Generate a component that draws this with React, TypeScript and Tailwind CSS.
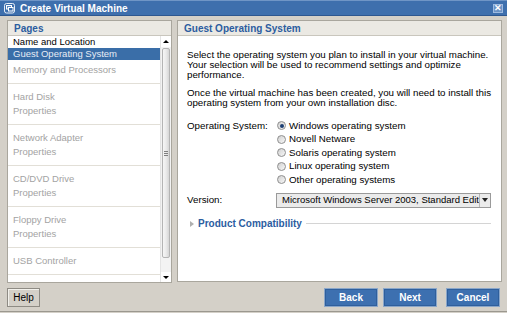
import React from 'react'

const font = "font-['Liberation_Sans',Arial,sans-serif]"

const devices: string[][] = [
  ['Hard Disk', 'Properties'],
  ['Network Adapter', 'Properties'],
  ['CD/DVD Drive', 'Properties'],
  ['Floppy Drive', 'Properties'],
  ['USB Controller'],
]

const osOptions = [
  'Windows operating system',
  'Novell Netware',
  'Solaris operating system',
  'Linux operating system',
  'Other operating systems',
]

function VmIcon() {
  return (
    <svg width="13" height="12" viewBox="0 0 13 12" fill="none">
      <rect x="1.5" y="1.5" width="10" height="9.5" rx="2" stroke="#e8eef7" strokeWidth="1" />
      <rect x="3.5" y="3.5" width="5" height="3.5" stroke="#ffffff" strokeWidth="1" fill="#5b86bd" />
      <rect x="5.5" y="5.5" width="4.5" height="3.5" stroke="#ffffff" strokeWidth="1" fill="#3e6fad" />
    </svg>
  )
}

function Radio({ checked }: { checked?: boolean }) {
  return (
    <span className="w-[9px] h-[9px] rounded-full border border-[#8e8e8e] bg-gradient-to-br from-[#d0d0d0] to-[#f8f8f8] flex items-center justify-center">
      {checked && <span className="w-[4px] h-[4px] rounded-full bg-[#1d3f73]" />}
    </span>
  )
}

function Scrollbar() {
  return (
    <div className="w-[11px] h-full flex flex-col bg-[#f3f3f3] border-l border-[#e4e4e4]">
      <div className="h-[11px] flex items-center justify-center bg-white">
        <span className="w-0 h-0 border-l-[3px] border-r-[3px] border-b-[3px] border-l-transparent border-r-transparent border-b-black" />
      </div>
      <div className="mt-[1px] h-[210px] mx-[1px] rounded-[2px] border border-[#b4b4b4] bg-gradient-to-r from-[#f6f6f6] via-[#ebebeb] to-[#d6d6d6] flex items-center justify-center">
        <div className="flex flex-col gap-[1px]">
          <span className="w-[4px] h-[1px] bg-[#808080]" />
          <span className="w-[4px] h-[1px] bg-[#808080]" />
          <span className="w-[4px] h-[1px] bg-[#808080]" />
        </div>
      </div>
      <div className="flex-1" />
      <div className="h-[10px] flex items-center justify-center bg-white">
        <span className="w-0 h-0 border-l-[3px] border-r-[3px] border-t-[3px] border-l-transparent border-r-transparent border-t-black" />
      </div>
    </div>
  )
}

function PanelHeader({ title }: { title: string }) {
  return (
    <div className="h-[15px] bg-[#ebe9e3] border-b border-[#c9c6bd] pl-[6px] flex items-center text-[10px] font-bold text-[#2c5d9f]">
      {title}
    </div>
  )
}

export default function App() {
  return (
    <div className={`w-[507px] h-[313px] bg-[#d4d0c8] flex flex-col overflow-hidden ${font} text-[9.5px] text-black`}>
      <div className="h-[16px] bg-[#3e6fad] border-t border-[#6f95c6] border-b border-b-[#2d5790] flex items-center pl-[3px] pr-[4px]">
        <VmIcon />
        <span className="ml-[4px] text-[10px] font-bold text-white flex-1">Create Virtual Machine</span>
        <span className="w-[10px] h-[9px] bg-[#6b93c6] border border-[#9fbbe0] flex items-center justify-center text-white text-[9px] font-bold leading-none">✕</span>
      </div>

      <div className="flex gap-[5px] pl-[7px] pt-[4px] h-[267px]">
        <div className="w-[165px] h-[263px] border border-[#a9a69d] flex flex-col bg-white">
          <PanelHeader title="Pages" />
          <div className="flex flex-1 min-h-0">
            <div className="flex-1 flex flex-col">
              <div className="h-[12px] leading-[12px] pl-[5px]">Name and Location</div>
              <div className="h-[12px] leading-[12px] pl-[5px] bg-[#3a6ea8] text-[#e6ecf5]">Guest Operating System</div>
              <div className="h-[24px] pt-[4px] leading-[12px] pl-[5px] text-[#a3a3a3] border-b border-[#e2dfd7]">Memory and Processors</div>
              {devices.map((d, i) => (
                <div key={i} className={`pl-[5px] pt-[6px] text-[#a3a3a3] border-b border-[#e2dfd7] ${d.length > 1 ? 'h-[41px]' : 'h-[27px]'}`}>
                  {d.map(l => (
                    <div key={l} className="leading-[14px]">{l}</div>
                  ))}
                </div>
              ))}
            </div>
            <Scrollbar />
          </div>
        </div>

        <div className="w-[325px] h-[262px] border border-[#a9a69d] flex flex-col bg-white">
          <PanelHeader title="Guest Operating System" />
          <div className="flex-1 pl-[9px] pt-[14px] leading-[10px] text-[9.75px]">
            <div>Select the operating system you plan to install in your virtual machine.</div>
            <div>Your selection will be used to recommend settings and optimize</div>
            <div>performance.</div>
            <div className="mt-[8px]">Once the virtual machine has been created, you will need to install this</div>
            <div>operating system from your own installation disc.</div>

            <div className="mt-[11px] flex">
              <div className="w-[89px] leading-[13.5px]">Operating System:</div>
              <div className="flex flex-col">
                {osOptions.map((o, i) => (
                  <div key={o} className="h-[13.5px] flex items-center gap-[3px] pl-[1px]">
                    <Radio checked={i === 0} />
                    <span>{o}</span>
                  </div>
                ))}
              </div>
            </div>

            <div className="mt-[6px] flex items-center">
              <div className="w-[89px]">Version:</div>
              <div className="w-[215px] h-[15px] border border-[#9a9a9a] bg-[#ebebeb] flex items-center">
                <span className="flex-1 overflow-hidden whitespace-nowrap pl-[5px] text-[9.5px]">Microsoft Windows Server 2003, Standard Edition</span>
                <span className="w-[11px] h-full border-l border-[#b8b8b8] flex items-center justify-center">
                  <span className="w-0 h-0 border-l-[3px] border-r-[3px] border-t-[4px] border-l-transparent border-r-transparent border-t-[#222]" />
                </span>
              </div>
            </div>

            <div className="mt-[11px] flex items-center pr-[10px]">
              <span className="w-0 h-0 border-t-[3px] border-b-[3px] border-l-[4px] border-t-transparent border-b-transparent border-l-[#b0b0b0] ml-[3px] mr-[4px]" />
              <span className="font-bold text-[10px] text-[#2c5d9f]">Product Compatibility</span>
              <span className="flex-1 h-[1px] bg-[#d4d4d4] ml-[4px]" />
            </div>
          </div>
        </div>
      </div>

      <div className="flex items-start pl-[7px] pr-[7px] pt-[5px] h-[28px]">
        <button className="w-[33px] h-[19px] bg-[#d4d0c8] border border-[#8e8b84] shadow-[inset_1px_1px_0_#f2f1ec] text-[10px] text-black">Help</button>
        <div className="flex-1" />
        <button className="w-[54px] h-[19px] bg-[#3d70b0] border border-[#8aa6c9] shadow-[inset_0_0_0_1px_#2f5f9c] text-[10px] font-bold text-white">Back</button>
        <button className="ml-[5px] w-[54px] h-[19px] bg-[#3d70b0] border border-[#8aa6c9] shadow-[inset_0_0_0_1px_#2f5f9c] text-[10px] font-bold text-white">Next</button>
        <button className="ml-[9px] w-[54px] h-[19px] bg-[#3d70b0] border border-[#8aa6c9] shadow-[inset_0_0_0_1px_#2f5f9c] text-[10px] font-bold text-white">Cancel</button>
      </div>
      <div className="h-[1px] bg-[#9b988f]" />
    </div>
  )
}
